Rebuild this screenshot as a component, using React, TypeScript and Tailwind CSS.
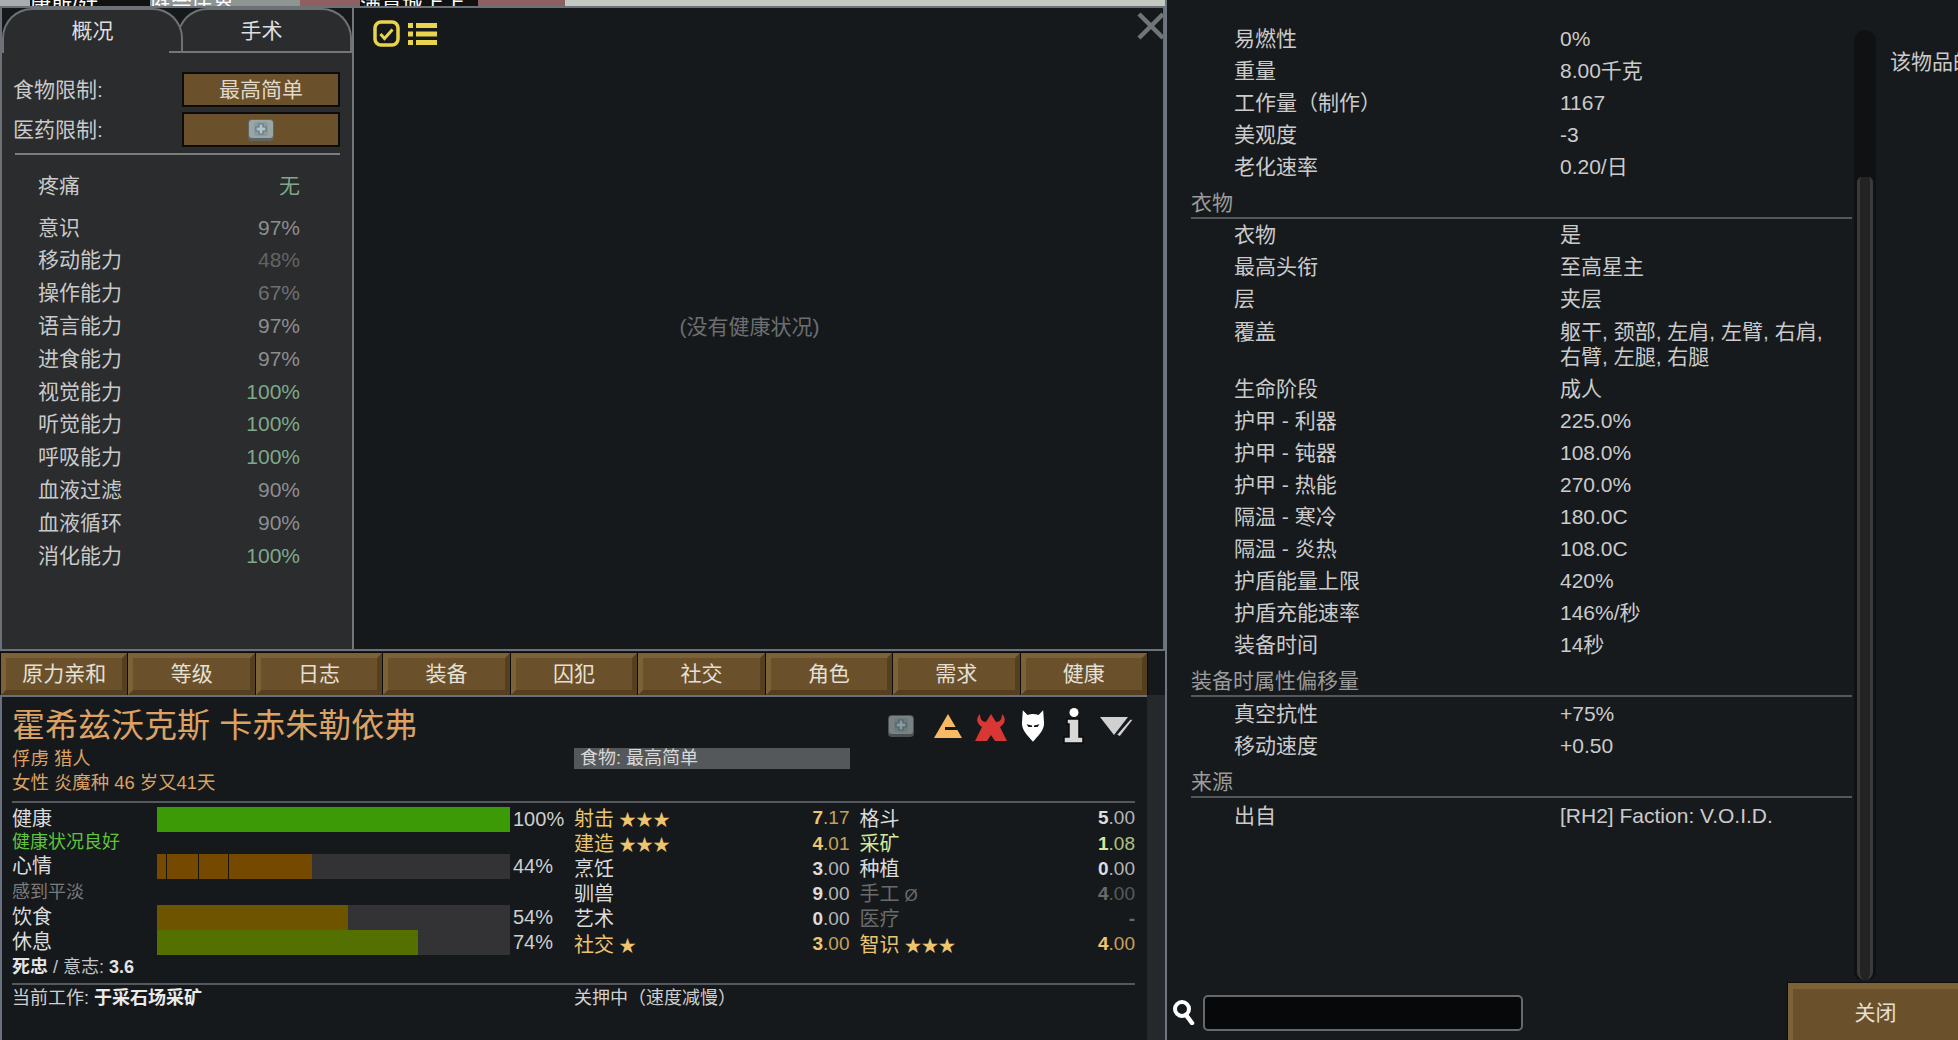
import React from 'react';

const capacities = [
  { name: '意识', value: '97%', color: 'text-[#8e8e8e]' },
  { name: '移动能力', value: '48%', color: 'text-[#646464]' },
  { name: '操作能力', value: '67%', color: 'text-[#707070]' },
  { name: '语言能力', value: '97%', color: 'text-[#8e8e8e]' },
  { name: '进食能力', value: '97%', color: 'text-[#8e8e8e]' },
  { name: '视觉能力', value: '100%', color: 'text-[#7fa98a]' },
  { name: '听觉能力', value: '100%', color: 'text-[#7fa98a]' },
  { name: '呼吸能力', value: '100%', color: 'text-[#7fa98a]' },
  { name: '血液过滤', value: '90%', color: 'text-[#8e8e8e]' },
  { name: '血液循环', value: '90%', color: 'text-[#8e8e8e]' },
  { name: '消化能力', value: '100%', color: 'text-[#7fa98a]' },
];

const tabs = ['原力亲和', '等级', '日志', '装备', '囚犯', '社交', '角色', '需求', '健康'];

const skills = [
  { name: '射击', mark: '★★★', whole: '7', frac: '.17', color: 'text-[#eec46e]' },
  { name: '格斗', mark: '', whole: '5', frac: '.00', color: 'text-[#dcdcdc]' },
  { name: '建造', mark: '★★★', whole: '4', frac: '.01', color: 'text-[#eec46e]' },
  { name: '采矿', mark: '', whole: '1', frac: '.08', color: 'text-[#d6e89a]' },
  { name: '烹饪', mark: '', whole: '3', frac: '.00', color: 'text-[#dcdcdc]' },
  { name: '种植', mark: '', whole: '0', frac: '.00', color: 'text-[#dcdcdc]' },
  { name: '驯兽', mark: '', whole: '9', frac: '.00', color: 'text-[#dcdcdc]' },
  { name: '手工', mark: 'Ø', whole: '4', frac: '.00', color: 'text-[#6a6a6a]' },
  { name: '艺术', mark: '', whole: '0', frac: '.00', color: 'text-[#dcdcdc]' },
  { name: '医疗', mark: '', whole: '-', frac: '', color: 'text-[#6a6a6a]' },
  { name: '社交', mark: '★', whole: '3', frac: '.00', color: 'text-[#eec46e]' },
  { name: '智识', mark: '★★★', whole: '4', frac: '.00', color: 'text-[#eec46e]' },
];

const statsA = [
  ['易燃性', '0%'],
  ['重量', '8.00千克'],
  ['工作量（制作）', '1167'],
  ['美观度', '-3'],
  ['老化速率', '0.20/日'],
];
const statsB = [
  ['衣物', '是'],
  ['最高头衔', '至高星主'],
  ['层', '夹层'],
];
const statsC = [
  ['生命阶段', '成人'],
  ['护甲 - 利器', '225.0%'],
  ['护甲 - 钝器', '108.0%'],
  ['护甲 - 热能', '270.0%'],
  ['隔温 - 寒冷', '180.0C'],
  ['隔温 - 炎热', '108.0C'],
  ['护盾能量上限', '420%'],
  ['护盾充能速率', '146%/秒'],
  ['装备时间', '14秒'],
];
const statsD = [
  ['真空抗性', '+75%'],
  ['移动速度', '+0.50'],
];

const bevel =
  'border-[5px] border-t-[#7d6238] border-l-[#7d6238] border-r-[#54401f] border-b-[#54401f] bg-[#6a512c] outline outline-1 outline-[#0c0c0c] flex items-center justify-center text-[#e6e0d4]';

const MedKit = ({ className }: { className: string }) => (
  <svg viewBox="0 0 28 24" className={className}>
    <rect x="1" y="1" width="26" height="22" rx="4" fill="#5f6464" />
    <rect x="2" y="2" width="24" height="18" rx="3" fill="#9aa5a6" />
    <rect x="7" y="4" width="14" height="14" rx="3" fill="#8c9a9d" />
    <path d="M12 6h4v3h3v4h-3v3h-4v-3H9V9h3z" fill="#b3c3c7" stroke="#5d7a85" strokeWidth="1.2" />
  </svg>
);

const StatRow = ({ label, value }: { label: string; value: string }) => (
  <div className="flex h-[32px] items-center pl-[67px]">
    <span className="w-[326px]">{label}</span>
    <span>{value}</span>
  </div>
);

const Section = ({ title, height }: { title: string; height: string }) => (
  <div className={`ml-[24px] flex w-[661px] items-center border-b-2 border-[#55585a] pt-[5px] text-[#9b9b9b] ${height}`}>
    {title}
  </div>
);

const Bar = ({ label, pct, fill, ticks }: { label: string; pct: number; fill: string; ticks?: number[] }) => (
  <div className="flex h-[25px] items-center">
    <span className="w-[145px] pb-[2px] text-[20px] text-[#dcdcdc]">{label}</span>
    <div className="relative h-[25px] w-[353px] bg-[#333335]">
      <div className={`h-full ${fill}`} style={{ width: `${pct}%` }} />
      {ticks?.map((t) => (
        <div key={t} className="absolute top-0 h-full w-px bg-[#1a1408]" style={{ left: t }} />
      ))}
    </div>
    <span className="ml-[3px] pb-[2px] text-[20px] text-[#cfcfcf]">{pct}%</span>
  </div>
);

export default function App() {
  return (
    <div className="flex h-[1040px] w-[1958px] overflow-hidden bg-[#16191c] text-[21px] text-[#c9c9c9] [font-family:'Liberation_Sans','Noto_Sans_CJK_SC',sans-serif]">
      {/* left window */}
      <div className="flex w-[1165px] shrink-0 flex-col">
        {/* strip of the map behind the window */}
        <div className="flex h-[6px] overflow-hidden text-[21px] leading-[6px]">
          <div className="w-[30px] bg-[#a9adb0]" />
          <div className="w-[120px] overflow-hidden whitespace-nowrap bg-[#111] pt-[1px] text-white">康斯/廷</div>
          <div className="w-[150px] overflow-hidden whitespace-nowrap bg-[#8d9492] pt-[1px] text-white">庭会庄界</div>
          <div className="w-[60px] bg-[#8e5f60]" />
          <div className="w-[118px] overflow-hidden whitespace-nowrap bg-[#111] pt-[1px] text-white">满意城上上</div>
          <div className="w-[87px] bg-[#8e5f60]" />
          <div className="flex-1 bg-[#c4c9c2]" />
        </div>

        <div className="flex h-[645px] border-x-2 border-y-2 border-[#6b7176]">
          {/* health sidebar */}
          <div className="flex w-[352px] shrink-0 flex-col border-r-2 border-[#74777a] bg-[#2a2c2e]">
            <div className="relative flex h-[45px] bg-[#16191c]">
              <div className="z-10 flex w-[181px] items-center justify-center rounded-t-[30px] border-x-2 border-t-2 border-[#6f7275] bg-[#2a2c2e] pb-[2px] text-[#dedede]">
                概况
              </div>
              <div className="-ml-[6px] flex flex-1 items-center justify-center rounded-t-[30px] border-x-2 border-t-2 border-[#6f7275] bg-[#2a2c2e] pb-[2px] pr-[6px] text-[#dedede]">
                手术
              </div>
              <div className="absolute bottom-0 left-[167px] right-0 z-20 h-[2px] bg-[#74777a]" />
            </div>

            <div className="mt-[19px] flex h-[35px] items-center pl-[11px]">
              <span className="w-[169px]">食物限制:</span>
              <div className="flex h-[35px] w-[158px] items-center justify-center border-2 border-[#0c0c0c] bg-[#6a512c] text-[#e0d8c8]">
                最高简单
              </div>
            </div>
            <div className="mt-[5px] flex h-[35px] items-center pl-[11px]">
              <span className="w-[169px]">医药限制:</span>
              <div className="flex h-[35px] w-[158px] items-center justify-center border-2 border-[#0c0c0c] bg-[#6a512c]">
                <MedKit className="h-[24px] w-[28px]" />
              </div>
            </div>
            <div className="ml-[13px] mt-[6px] h-[2px] w-[325px] bg-[#7b7d7f]" />

            <div className="mt-[14px] flex h-[33px] items-center justify-between pl-[36px] pr-[52px]">
              <span>疼痛</span>
              <span className="text-[#7fa98a]">无</span>
            </div>
            <div className="mt-[9px] flex flex-col">
              {capacities.map((c) => (
                <div key={c.name} className="flex h-[32.8px] items-center justify-between pl-[36px] pr-[52px]">
                  <span>{c.name}</span>
                  <span className={c.color}>{c.value}</span>
                </div>
              ))}
            </div>
          </div>

          {/* no conditions pane */}
          <div className="relative flex-1 overflow-hidden">
            <div className="flex items-center gap-[8px] pl-[19px] pt-[12px] text-[#e8d44d]">
              <svg viewBox="0 0 27 27" className="h-[27px] w-[27px]">
                <rect x="2" y="2" width="23" height="23" rx="6" fill="none" stroke="#e8d44d" strokeWidth="3.5" />
                <path d="M7.5 14l4 4.5 8-9" fill="none" stroke="#e8d44d" strokeWidth="3" />
              </svg>
              <svg viewBox="0 0 29 22" className="h-[22px] w-[29px]" fill="#e8d44d">
                <rect x="0" y="0" width="5" height="5" />
                <rect x="8" y="0" width="21" height="5" />
                <rect x="0" y="8.5" width="5" height="5" />
                <rect x="8" y="8.5" width="21" height="5" />
                <rect x="0" y="17" width="5" height="5" />
                <rect x="8" y="17" width="21" height="5" />
              </svg>
            </div>
            <div className="mt-[264px] pr-[18px] text-center text-[#6c6e70]">(没有健康状况)</div>
            <svg viewBox="0 0 30 30" className="absolute right-[-3px] top-[3px] h-[30px] w-[30px]">
              <path d="M3 3l24 24M27 3L3 27" stroke="#70757a" strokeWidth="4.5" />
            </svg>
          </div>
        </div>

        {/* main tabs */}
        <div className="grid h-[44px] w-[1147px] grid-cols-9 gap-[1px] pl-[1px] pt-[2px]">
          {tabs.map((t) => (
            <div key={t} className={bevel}>
              {t}
            </div>
          ))}
        </div>

        <div className="flex flex-1">
          {/* pawn info */}
          <div className="h-full w-[1147px] border-l-2 border-t-2 border-[#6b7080] pl-[10px] pt-[9px]">
            <div className="flex h-[40px] w-[1123px] items-center justify-between">
              <span className="text-[33px] text-[#dba264]">霍希兹沃克斯 卡赤朱勒依弗</span>
              <div className="flex items-center pr-[1px]">
                <MedKit className="mr-[19px] h-[24px] w-[28px] opacity-75" />
                <svg viewBox="0 0 28 24" className="mr-[13px] h-[24px] w-[28px]">
                  <path d="M14 0L28 24H0z" fill="#f7b964" />
                  <rect x="11" y="13" width="12" height="3" fill="#16191c" />
                </svg>
                <svg viewBox="0 0 32 30" className="mr-[14px] h-[30px] w-[32px]">
                  <path
                    d="M16 3L21 11C25 11 27 8 27 3C31 7 31 12 25 16L32 30H20L16 24L12 30H0L7 16C1 12 1 7 5 3C5 8 7 11 11 11Z"
                    fill="#d93636"
                  />
                </svg>
                <svg viewBox="0 0 26 34" className="mr-[18px] h-[34px] w-[24px]">
                  <path d="M2 0L7 5Q13 3 19 5L24 0L25 14C25 22 18 28 13 34C8 28 1 22 1 14Z" fill="#fff" />
                  <path d="M6 15l6 1.5v1.5H8zM20 15l-6 1.5v1.5h4z" fill="#16191c" />
                </svg>
                <svg viewBox="0 0 22 36" className="mr-[15px] h-[36px] w-[22px]">
                  <circle cx="11" cy="4.5" r="4.5" fill="#fff" />
                  <path d="M4 11h12v18h4v6H1v-6h5V16H4z" fill="#d8d8d8" stroke="#0a0a0a" strokeWidth="1.5" />
                </svg>
                <svg viewBox="0 0 34 22" className="h-[22px] w-[34px]">
                  <path d="M0 2h28L14 20z" fill="#d0d0d0" />
                  <path d="M34 4L20 22l-4-2L30 4z" fill="#d0d0d0" stroke="#16191c" strokeWidth="1.5" />
                </svg>
              </div>
            </div>
            <div className="flex">
              <div className="w-[562px] text-[18.4px] leading-[25px] text-[#dba264]">
                <div>俘虏 猎人</div>
                <div className="-mt-[1px]">女性 炎魔种 46 岁又41天</div>
              </div>
              <div className="mt-[2px] flex h-[21px] w-[276px] items-center bg-[#55585b] pl-[6px] text-[18px] text-[#d8d8d8]">
                食物: 最高简单
              </div>
            </div>
            <div className="mt-[6px] h-[2px] w-[1123px] bg-[#55585c]" />

            <div className="flex pt-[4px]">
              <div className="w-[562px]">
                <Bar label="健康" pct={100} fill="bg-[#3c9a06]" />
                <div className="flex h-[22px] items-center pb-[2px] text-[18px] text-[#5fc43c]">健康状况良好</div>
                <Bar label="心情" pct={44} fill="bg-[#754a00]" ticks={[9, 41, 71]} />
                <div className="flex h-[26px] items-center text-[18px] text-[#7a7a7a]">感到平淡</div>
                <Bar label="饮食" pct={54} fill="bg-[#6f5400]" />
                <Bar label="休息" pct={74} fill="bg-[#537000]" />
                <div className="flex h-[24px] items-center text-[18px] text-[#c4c4c4]">
                  <b className="font-bold text-[#e4e4e4]">死忠</b>
                  <span className="ml-[5px]">/ 意志:</span>
                  <b className="ml-[5px] font-bold text-[#e4e4e4]">3.6</b>
                </div>
              </div>

              <div className="-mt-[1px] grid h-[151px] w-[561px] grid-cols-2 gap-x-[10px]">
                {skills.map((s) => (
                  <div key={s.name} className={`flex h-[25.2px] items-center justify-between text-[20px] ${s.color}`}>
                    <span className="whitespace-nowrap">
                      {s.name}
                      {s.mark && <span className="ml-[5px] text-[17px]">{s.mark}</span>}
                    </span>
                    <span className="text-[19px]">
                      <b className="font-bold">{s.whole}</b>
                      <span className="opacity-80">{s.frac}</span>
                    </span>
                  </div>
                ))}
              </div>
            </div>

            <div className="mt-[4px] h-[2px] w-[1123px] bg-[#55585c]" />
            <div className="flex h-[26px] items-center text-[18px] text-[#d0d0d0]">
              <div className="w-[562px]">
                当前工作: <b className="font-bold text-[#eaeaea]">于采石场采矿</b>
              </div>
              <div>关押中（速度减慢）</div>
            </div>
          </div>
          <div className="flex-1 bg-[#26292b]" />
        </div>
      </div>

      {/* right window */}
      <div className="flex w-[793px] shrink-0 flex-col border-l-2 border-[#6f7880] bg-[#171a1d] text-[#cbcbcb]">
        <div className="flex h-[983px] overflow-hidden">
          <div className="w-[687px] shrink-0 pt-[23px]">
            {statsA.map(([l, v]) => (
              <StatRow key={l} label={l} value={v} />
            ))}
            <Section title="衣物" height="h-[36px]" />
            {statsB.map(([l, v]) => (
              <StatRow key={l} label={l} value={v} />
            ))}
            <div className="flex h-[58px] pl-[67px] pt-[4px] leading-[25px]">
              <span className="w-[326px]">覆盖</span>
              <span className="w-[290px]">
                躯干, 颈部, 左肩, 左臂, 右肩,
                <br />
                右臂, 左腿, 右腿
              </span>
            </div>
            {statsC.map(([l, v]) => (
              <StatRow key={l} label={l} value={v} />
            ))}
            <Section title="装备时属性偏移量" height="h-[36px]" />
            <div className="pt-[1px]">
              {statsD.map(([l, v]) => (
                <StatRow key={l} label={l} value={v} />
              ))}
            </div>
            <Section title="来源" height="h-[36px]" />
            <div className="pt-[2px]">
              <StatRow label="出自" value="[RH2] Faction: V.O.I.D." />
            </div>
          </div>

          {/* scrollbar */}
          <div className="mt-[30px] flex h-[950px] w-[22px] shrink-0 flex-col items-center rounded-t-[11px] rounded-b-[8px] bg-[#0f1113]">
            <div className="mt-[147px] h-[803px] w-[16px] rounded-t-[5px] rounded-b-[8px] border-x-[3px] border-[#3a3a3b] bg-[#232324]" />
          </div>
          <div className="ml-[14px] mt-[46px] whitespace-nowrap">该物品的</div>
        </div>

        <div className="flex flex-1 items-start">
          <svg viewBox="0 0 24 26" className="ml-[5px] mt-[16px] h-[26px] w-[24px]">
            <circle cx="10" cy="10" r="7" fill="none" stroke="#fff" strokeWidth="4" />
            <path d="M14 16l6 8" stroke="#fff" strokeWidth="4.5" strokeLinecap="round" />
          </svg>
          <div className="ml-[7px] mt-[12px] h-[36px] w-[320px] rounded-[5px] border-2 border-[#66696b] bg-[#060809]" />
          <div className="ml-auto flex h-[57px] w-[170px] items-center justify-center border-t-[6px] border-l-[5px] border-t-[#7d6238] border-l-[#7d6238] bg-[#6a512c] pb-[4px] text-[#e6e0d4] outline outline-1 outline-[#0c0c0c]">
            关闭
          </div>
        </div>
      </div>
    </div>
  );
}
